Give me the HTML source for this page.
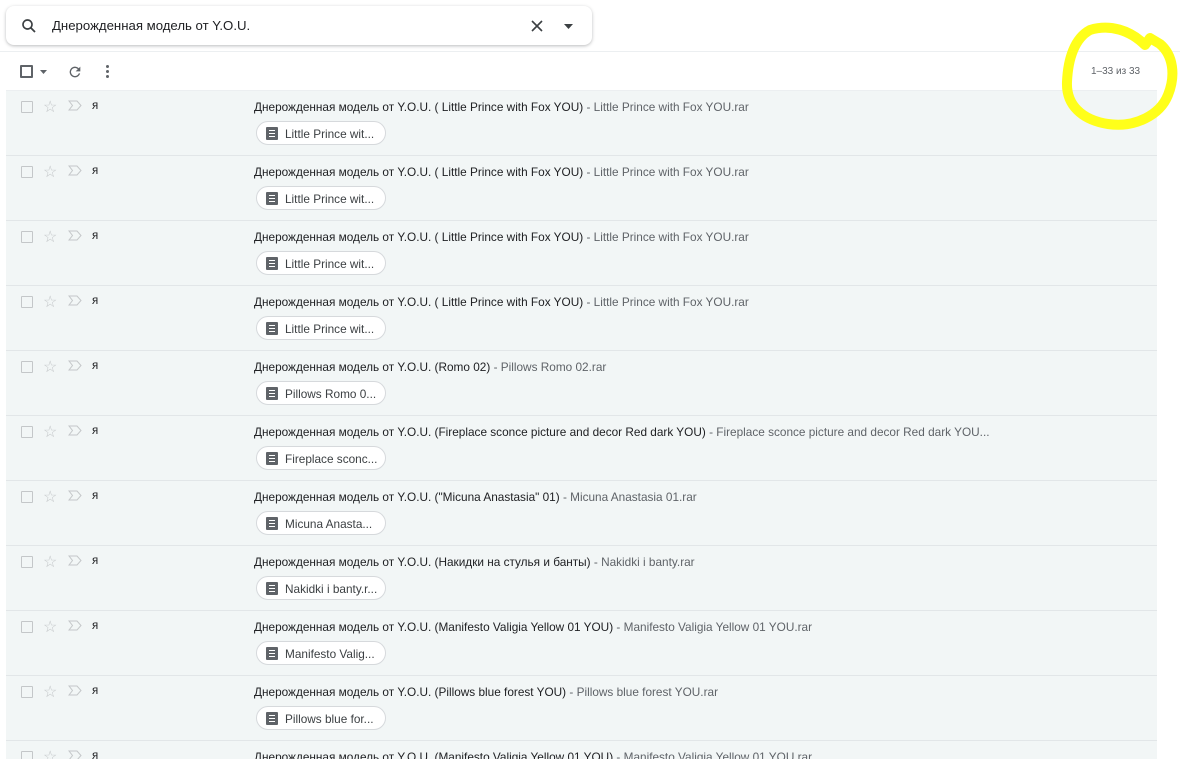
<!DOCTYPE html>
<html style="height:759px;overflow:hidden"><head><meta charset="utf-8"><style>
*{margin:0;padding:0;box-sizing:border-box}
body{width:1180px;height:759px;overflow:hidden;background:#fff;font-family:"Liberation Sans",Arial,sans-serif;position:relative;color:#202124}
.search{position:absolute;left:6px;top:6px;width:586px;height:39px;border-radius:8px;box-shadow:0 1px 3px rgba(60,64,67,.35);background:#fff}
.search .q{position:absolute;left:46px;top:12px;font-size:13.2px;color:#202124}
.hl{position:absolute;left:0;right:0;height:1px;background:#eceff1}
.row{position:absolute;left:6px;width:1151px;height:65px;background:#f2f6f6;border-bottom:1px solid #e2e6e8}
.cb{position:absolute;left:15px;top:10px;width:12px;height:12px;border:1.5px solid #c4c7c9;border-radius:1px}
.st{position:absolute;left:37px;top:6px;color:#c4c7c9;font-size:16px}
.imp{position:absolute;left:62px;top:9px}
.from{position:absolute;left:86px;top:9px;font-size:11.5px;color:#202124}
.subj{position:absolute;left:248px;top:9px;font-size:11.8px;color:#202124;white-space:nowrap}
.subj span{color:#5f6368}
.chip{position:absolute;left:250px;top:30px;width:130px;height:24px;border:1px solid #d6d9dc;border-radius:12px;background:#fff;font-size:11.8px;color:#3c4043}
.chip i{position:absolute;left:9px;top:5px;width:12px;height:13px;background:#5f6368;border-radius:1px}
.chip i:before{content:"";position:absolute;left:3px;top:3px;width:6px;height:1px;background:#fff;box-shadow:0 3px 0 #fff,0 6px 0 #fff}
.chip b{position:absolute;left:28px;top:5px;font-weight:normal}
</style></head><body>
<div class="search">
<svg style="position:absolute;left:14px;top:11px" width="18" height="18" viewBox="0 0 24 24"><circle cx="10" cy="10" r="6" fill="none" stroke="#3c4043" stroke-width="2.2"/><path d="M14.5 14.5L20 20" stroke="#3c4043" stroke-width="2.4"/></svg>
<div class="q">Днерожденная модель от Y.O.U.</div>
<svg style="position:absolute;left:524px;top:13px" width="14" height="14" viewBox="0 0 14 14"><path d="M2 2L12 12M12 2L2 12" stroke="#3c4043" stroke-width="1.6"/></svg>
<svg style="position:absolute;left:558px;top:18px" width="9" height="5"><path d="M0 0H9L4.5 5Z" fill="#3c4043"/></svg>
</div>
<div class="hl" style="top:51px"></div>
<div style="position:absolute;left:20px;top:65px;width:13px;height:13px;border:2px solid #5f6368;border-radius:1px"></div>
<svg style="position:absolute;left:40px;top:70px" width="7" height="4"><path d="M0 0H7L3.5 4Z" fill="#5f6368"/></svg>
<svg style="position:absolute;left:67px;top:64px" width="16" height="16" viewBox="0 0 24 24"><path d="M17.65 6.35A8 8 0 1 0 19.730 14h-2.08A6 6 0 1 1 12 6c1.66 0 3.14.69 4.22 1.78L13 11h7V4z" fill="#5f6368"/></svg>
<div style="position:absolute;left:106px;top:65px;width:3px;height:3px;background:#5f6368;border-radius:50%;box-shadow:0 5px 0 #5f6368,0 10px 0 #5f6368"></div>
<div style="position:absolute;left:1091px;top:66px;font-size:10px;color:#5f6368">1–33 из 33</div>
<div class="hl" style="top:90px;right:23px;left:6px"></div>

<div class="row" style="top:91px"><div class="cb"></div><div class="st">☆</div><svg class="imp" width="14" height="11"><path d="M1 1H9L13 5.5L9 10H1L4.5 5.5Z" fill="none" stroke="#c4c7c9"/></svg><div class="from">я</div><div class="subj">Днерожденная модель от Y.O.U. ( Little Prince with Fox YOU) <span>- Little Prince with Fox YOU.rar</span></div><div class="chip"><i></i><b>Little Prince wit...</b></div></div>
<div class="row" style="top:156px"><div class="cb"></div><div class="st">☆</div><svg class="imp" width="14" height="11"><path d="M1 1H9L13 5.5L9 10H1L4.5 5.5Z" fill="none" stroke="#c4c7c9"/></svg><div class="from">я</div><div class="subj">Днерожденная модель от Y.O.U. ( Little Prince with Fox YOU) <span>- Little Prince with Fox YOU.rar</span></div><div class="chip"><i></i><b>Little Prince wit...</b></div></div>
<div class="row" style="top:221px"><div class="cb"></div><div class="st">☆</div><svg class="imp" width="14" height="11"><path d="M1 1H9L13 5.5L9 10H1L4.5 5.5Z" fill="none" stroke="#c4c7c9"/></svg><div class="from">я</div><div class="subj">Днерожденная модель от Y.O.U. ( Little Prince with Fox YOU) <span>- Little Prince with Fox YOU.rar</span></div><div class="chip"><i></i><b>Little Prince wit...</b></div></div>
<div class="row" style="top:286px"><div class="cb"></div><div class="st">☆</div><svg class="imp" width="14" height="11"><path d="M1 1H9L13 5.5L9 10H1L4.5 5.5Z" fill="none" stroke="#c4c7c9"/></svg><div class="from">я</div><div class="subj">Днерожденная модель от Y.O.U. ( Little Prince with Fox YOU) <span>- Little Prince with Fox YOU.rar</span></div><div class="chip"><i></i><b>Little Prince wit...</b></div></div>
<div class="row" style="top:351px"><div class="cb"></div><div class="st">☆</div><svg class="imp" width="14" height="11"><path d="M1 1H9L13 5.5L9 10H1L4.5 5.5Z" fill="none" stroke="#c4c7c9"/></svg><div class="from">я</div><div class="subj">Днерожденная модель от Y.O.U. (Romo 02) <span>- Pillows Romo 02.rar</span></div><div class="chip"><i></i><b>Pillows Romo 0...</b></div></div>
<div class="row" style="top:416px"><div class="cb"></div><div class="st">☆</div><svg class="imp" width="14" height="11"><path d="M1 1H9L13 5.5L9 10H1L4.5 5.5Z" fill="none" stroke="#c4c7c9"/></svg><div class="from">я</div><div class="subj">Днерожденная модель от Y.O.U. (Fireplace sconce picture and decor Red dark YOU) <span>- Fireplace sconce picture and decor Red dark YOU...</span></div><div class="chip"><i></i><b>Fireplace sconc...</b></div></div>
<div class="row" style="top:481px"><div class="cb"></div><div class="st">☆</div><svg class="imp" width="14" height="11"><path d="M1 1H9L13 5.5L9 10H1L4.5 5.5Z" fill="none" stroke="#c4c7c9"/></svg><div class="from">я</div><div class="subj">Днерожденная модель от Y.O.U. ("Micuna Anastasia" 01) <span>- Micuna Anastasia 01.rar</span></div><div class="chip"><i></i><b>Micuna Anasta...</b></div></div>
<div class="row" style="top:546px"><div class="cb"></div><div class="st">☆</div><svg class="imp" width="14" height="11"><path d="M1 1H9L13 5.5L9 10H1L4.5 5.5Z" fill="none" stroke="#c4c7c9"/></svg><div class="from">я</div><div class="subj">Днерожденная модель от Y.O.U. (Накидки на стулья и банты) <span>- Nakidki i banty.rar</span></div><div class="chip"><i></i><b>Nakidki i banty.r...</b></div></div>
<div class="row" style="top:611px"><div class="cb"></div><div class="st">☆</div><svg class="imp" width="14" height="11"><path d="M1 1H9L13 5.5L9 10H1L4.5 5.5Z" fill="none" stroke="#c4c7c9"/></svg><div class="from">я</div><div class="subj">Днерожденная модель от Y.O.U. (Manifesto Valigia Yellow 01 YOU) <span>- Manifesto Valigia Yellow 01 YOU.rar</span></div><div class="chip"><i></i><b>Manifesto Valig...</b></div></div>
<div class="row" style="top:676px"><div class="cb"></div><div class="st">☆</div><svg class="imp" width="14" height="11"><path d="M1 1H9L13 5.5L9 10H1L4.5 5.5Z" fill="none" stroke="#c4c7c9"/></svg><div class="from">я</div><div class="subj">Днерожденная модель от Y.O.U. (Pillows blue forest YOU) <span>- Pillows blue forest YOU.rar</span></div><div class="chip"><i></i><b>Pillows blue for...</b></div></div>
<div class="row" style="top:741px;height:18px;border-bottom:none"><div class="cb"></div><div class="st">☆</div><svg class="imp" width="14" height="11"><path d="M1 1H9L13 5.5L9 10H1L4.5 5.5Z" fill="none" stroke="#c4c7c9"/></svg><div class="from">я</div><div class="subj">Днерожденная модель от Y.O.U. (Manifesto Valigia Yellow 01 YOU) <span>- Manifesto Valigia Yellow 01 YOU.rar</span></div></div>

<svg style="position:absolute;left:1050px;top:0" width="130" height="140" viewBox="1050 0 130 140"><path d="M1090 30C1110 24 1130 30 1145 45L1150 38L1160 44C1173 55 1176 75 1168 95C1160 115 1135 128 1108 124C1082 120 1066 105 1067 82C1068 58 1075 38 1090 30Z" fill="none" stroke="#ffff1a" stroke-width="10" stroke-linejoin="round" stroke-linecap="round"/></svg>
</body></html>
